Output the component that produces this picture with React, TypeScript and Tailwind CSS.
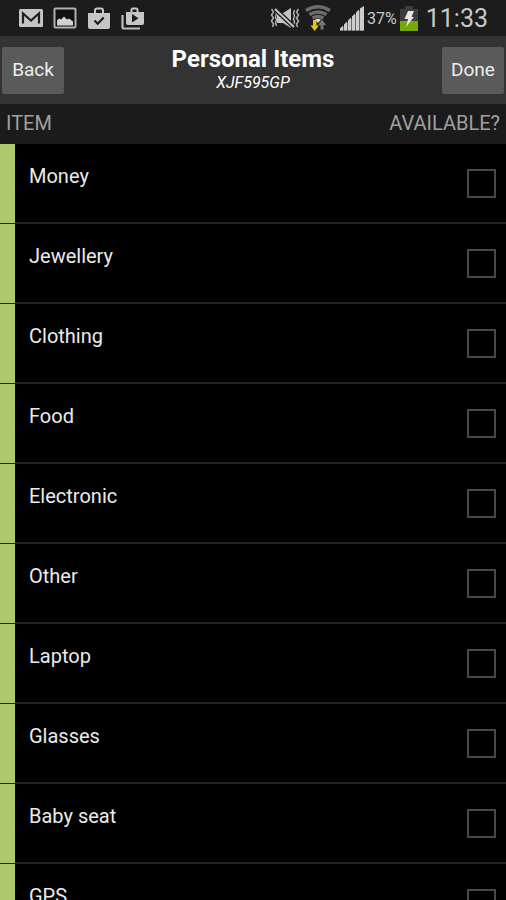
import React from "react";

const items = ["Money", "Jewellery", "Clothing", "Food", "Electronic", "Other", "Laptop", "Glasses", "Baby seat", "GPS"];

function MailIcon() {
  return (
    <svg width="24" height="20" viewBox="0 0 24 20" aria-hidden="true">
      <rect x="0" y="1" width="24" height="18" rx="1.5" fill="#c6c6c6" />
      <path d="M4 15.500V5.500L12 12.500L20 5.500V15.500" fill="none" stroke="#222" strokeWidth="2.200" />
    </svg>
  );
}

function PictureIcon() {
  return (
    <svg width="24" height="22" viewBox="0 0 24 22" aria-hidden="true">
      <rect x="1.500" y="1.500" width="21" height="19" rx="1" fill="#111" stroke="#b0b0b0" strokeWidth="2" />
      <path d="M4 18.500v-5l2-2 2 1 3-3 3 3 2-1 4 3v4z" fill="#d2d2d2" />
    </svg>
  );
}

function BagCheckIcon() {
  return (
    <svg width="24" height="23" viewBox="0 0 24 23" aria-hidden="true">
      <path d="M8 6V3.500Q8 1.500 10 1.500h4Q16 1.500 16 3.500V6" fill="none" stroke="#c6c6c6" strokeWidth="2" />
      <path d="M1 6h22v14q0 2-2 2H3q-2 0-2-2z" fill="#c6c6c6" />
      <path d="M7.500 13.500l3.200 3.200 6-6.200" fill="none" stroke="#1b1b1b" strokeWidth="2.200" />
    </svg>
  );
}

function BagPlayIcon() {
  return (
    <svg width="24" height="23" viewBox="0 0 24 23" aria-hidden="true">
      <path d="M1.500 8v12q0 1.500 1.500 1.500h16" fill="none" stroke="#bcbcbc" strokeWidth="2.200" />
      <path d="M10.500 5V3q0-1.500 1.500-1.500h3q1.500 0 1.500 1.500v2" fill="none" stroke="#c6c6c6" strokeWidth="2" />
      <path d="M5 5h18v11q0 2-2 2H7q-2 0-2-2z" fill="#c6c6c6" />
      <path d="M11 7v8.500l6.500-4.200z" fill="#1b1b1b" />
    </svg>
  );
}

function SilentIcon() {
  return (
    <svg width="30" height="22" viewBox="0 0 30 22" aria-hidden="true">
      <path d="M7 6h6l8-5v20L13 16H7z" fill="#c4c4c4" />
      <path d="M1.500 2l2 3-2 3 2 3-2 3 2 3-1 3M5.500 4l1 3-1 3 1 3-1 3 1 3M24.500 3l-1 3 1 3-1 3 1 3-1 4M28.500 2l-2 3 2 3-2 3 2 3-2 3 1 3" fill="none" stroke="#b0b0b0" strokeWidth="1.500" />
      <path d="M5 2l19 18" stroke="#1c1c1c" strokeWidth="4.500" />
      <path d="M5 2l19 18" stroke="#c4c4c4" strokeWidth="2" />
    </svg>
  );
}

function WifiIcon() {
  return (
    <svg width="26" height="26" viewBox="0 0 26 26" aria-hidden="true">
      <g fill="none" stroke="#6c6c6c" strokeWidth="3.400">
        <path d="M1 5.500q12-7.500 24 0" />
        <path d="M4.500 9.500q8.500-5 17 0" />
        <path d="M7.500 13q5.500-3 11 0" />
      </g>
      <path d="M10 14.500q3-1.500 6 0L13 18z" fill="#ddd" />
      <path d="M8 15h3.500v5.500H14L9.500 26 5.500 20.500H8z" fill="#e8c414" />
      <path d="M15.500 24.500V20H13l4-5.500 4 5.500h-2.500v4.500z" fill="#777" />
    </svg>
  );
}

function SignalIcon() {
  return (
    <svg width="24" height="25" viewBox="0 0 24 25" aria-hidden="true">
      <path d="M0 24.500L24 0v24.500z" fill="#6a6a6a" />
      <path d="M0 24.500v-2l3-3v5zM4 24.500v-6l3-3v9zM8 24.500v-10l3-3v13zM12 24.500v-14l3-3v17zM16 24.500v-18l3-3v21zM20 24.500v-22l4-2.500v24.500z" fill="#cdcdcd" />
    </svg>
  );
}

function BatteryIcon() {
  return (
    <svg width="18" height="25" viewBox="0 0 18 25" aria-hidden="true">
      <path d="M0 3h5V0h8v3h5v22H0z" fill="#3d3d3d" />
      <path d="M0 15h18v10H0z" fill="#76a808" />
      <path d="M8 5h6l-2.500 6H14L6 21l2-8H4.500z" fill="#e6e6e6" />
    </svg>
  );
}

function StatusBar() {
  return (
    <div className="flex h-9 shrink-0 items-center justify-between bg-[#1c1c1c] pr-[18px] pl-[19px] text-[#c8c8c8]">
      <div className="flex items-center gap-[10px]">
        <MailIcon />
        <PictureIcon />
        <BagCheckIcon />
        <BagPlayIcon />
      </div>
      <div className="flex items-center">
        <SilentIcon />
        <span className="ml-[5px]"><WifiIcon /></span>
        <span className="ml-[9px]"><SignalIcon /></span>
        <span className="ml-[3px] pt-px text-base">37%</span>
        <span className="ml-[3px]"><BatteryIcon /></span>
        <time className="ml-2 pt-[2px] text-[25px] leading-9">11:33</time>
      </div>
    </div>
  );
}

function BarButton({ children }: { children: React.ReactNode }) {
  return (
    <button type="button" className="h-[47px] w-[62px] rounded-xs bg-[#5a5a5a] text-[19px] text-[#ededed]">
      {children}
    </button>
  );
}

export default function App() {
  return (
    <div className="flex h-screen flex-col overflow-hidden bg-black font-['Roboto',sans-serif]">
      <StatusBar />
      <header className="flex h-[68px] shrink-0 items-center justify-between bg-[#333333] px-[2px]">
        <BarButton>Back</BarButton>
        <div className="pb-[2px] text-center text-white">
          <h1 className="text-2xl leading-7 font-bold">Personal Items</h1>
          <p className="text-base leading-5 italic">XJF595GP</p>
        </div>
        <BarButton>Done</BarButton>
      </header>
      <div className="flex h-10 shrink-0 items-center justify-between bg-[#1b1b1b] px-[6px] pb-[2px] text-xl text-[#a0a0a0]">
        <span>ITEM</span>
        <span>AVAILABLE?</span>
      </div>
      <ul className="min-h-0 flex-1 overflow-y-auto [scrollbar-width:none]">
        {items.map((item) => (
          <li key={item}>
            <label className="flex h-20 border-b-2 border-[#222222] text-xl text-[#ebebeb]">
              <span className="-mb-px w-[15px] bg-[#adc96c]" />
              <span className="flex-1 pt-[18px] pl-[14px]">{item}</span>
              <input
                type="checkbox"
                className="mt-[25px] mr-[10px] size-[29px] appearance-none border-2 border-[#484848] checked:bg-[#adc96c]"
              />
            </label>
          </li>
        ))}
      </ul>
    </div>
  );
}
